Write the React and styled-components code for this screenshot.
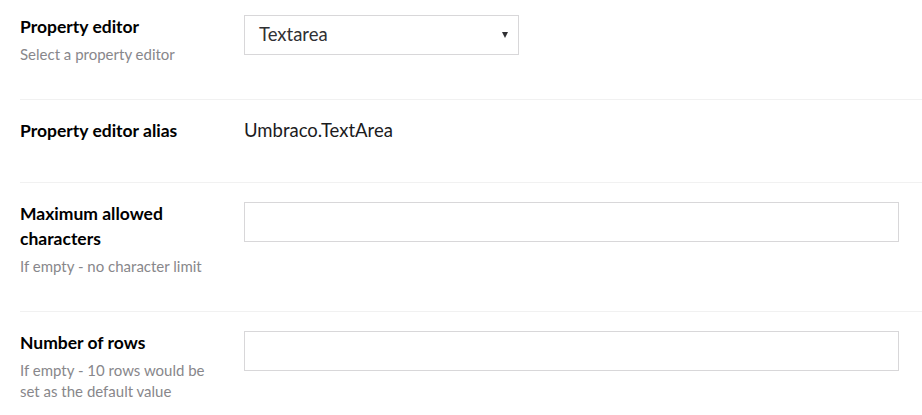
import styled, { createGlobalStyle } from "styled-components";

const GlobalStyle = createGlobalStyle`
  body {
    margin: 0;
    background: #fff;
    font-family: Lato, "Open Sans", sans-serif;
    color: #000;
  }
`;

const Page = styled.div`
  padding-left: 20px;
  width: 902px;
`;

const Row = styled.div`
  display: flex;
  padding-top: ${(p) => p.$top || 19}px;
  padding-bottom: ${(p) => p.$bottom || 34}px;
  border-bottom: ${(p) => (p.$last ? "none" : "1px solid #f1f1f1")};
`;

const LabelColumn = styled.div`
  width: 200px;
  margin-right: 24px;
  margin-top: -1px;
  flex-shrink: 0;
`;

const Label = styled.div`
  font-size: 17.5px;
  font-weight: 700;
  line-height: 25px;
  color: #000;
`;

const Description = styled.div`
  font-size: 15px;
  line-height: 21px;
  color: #88878b;
  margin-top: 5px;
`;

const Control = styled.div`
  flex: 1;
  padding-right: 23px;
`;

const SelectBox = styled.div`
  width: 275px;
  height: 40px;
  box-sizing: border-box;
  border: 1px solid #d8d7d9;
  display: flex;
  align-items: center;
  justify-content: space-between;
  padding: 0 8px 3px 14px;
  font-size: 18.5px;
  color: #303033;
`;

const Caret = styled.span`
  width: 0;
  height: 0;
  border-left: 3.5px solid transparent;
  border-right: 3.5px solid transparent;
  border-top: 6px solid #303033;
  margin: 3px 2px 0 0;
`;

const ValueText = styled.div`
  font-size: 18.5px;
  line-height: 25px;
  margin-top: -1px;
  color: #1b1b1d;
`;

const TextInput = styled.div`
  height: 40px;
  box-sizing: border-box;
  border: 1px solid #d8d7d9;
`;

export default function App() {
  return (
    <>
      <GlobalStyle />
      <Page>
        <Row $top={15}>
          <LabelColumn>
            <Label>Property editor</Label>
            <Description>Select a property editor</Description>
          </LabelColumn>
          <Control>
            <SelectBox>
              <span>Textarea</span>
              <Caret />
            </SelectBox>
          </Control>
        </Row>
        <Row $bottom={39}>
          <LabelColumn>
            <Label>Property editor alias</Label>
          </LabelColumn>
          <Control>
            <ValueText>Umbraco.TextArea</ValueText>
          </Control>
        </Row>
        <Row>
          <LabelColumn>
            <Label>Maximum allowed characters</Label>
            <Description>If empty - no character limit</Description>
          </LabelColumn>
          <Control>
            <TextInput />
          </Control>
        </Row>
        <Row $last>
          <LabelColumn>
            <Label>Number of rows</Label>
            <Description>If empty - 10 rows would be set as the default value</Description>
          </LabelColumn>
          <Control>
            <TextInput />
          </Control>
        </Row>
      </Page>
    </>
  );
}
